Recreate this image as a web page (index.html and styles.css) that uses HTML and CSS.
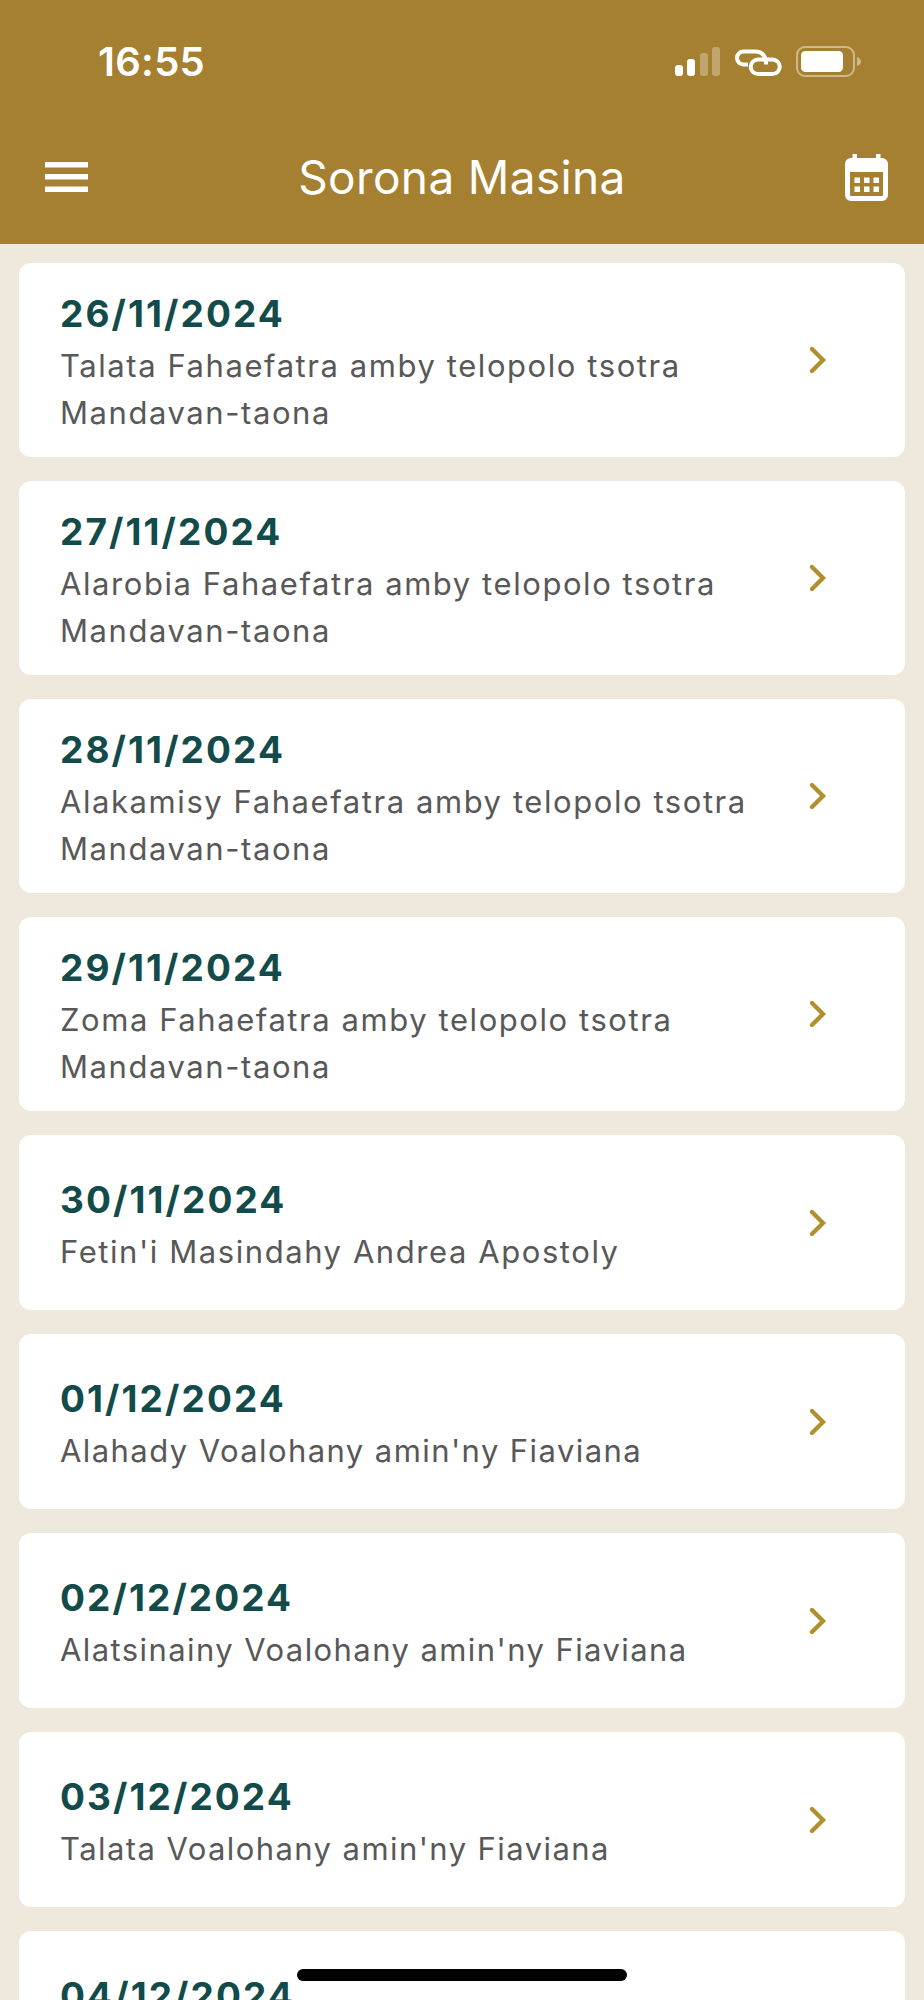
FILE: index.html
```html
<!DOCTYPE html>
<html lang="mg">
<head>
<meta charset="utf-8">
<title>Sorona Masina</title>
<link rel="stylesheet" href="styles.css">
</head>
<body>
<div class="screen">
  <header class="header">
    <div class="status">
      <span class="time">16:55</span>
      <div class="status-icons">
        <svg class="ic-signal" width="45" height="29" viewBox="0 0 45 29"><rect x="0" y="18" width="8" height="11" rx="3" fill="#fff"/><rect x="12" y="12" width="8" height="17" rx="3" fill="#fff"/><rect x="25" y="6" width="8" height="23" rx="3" fill="#fff" fill-opacity=".3"/><rect x="37" y="0" width="8" height="29" rx="3" fill="#fff" fill-opacity=".3"/></svg>
        <svg class="ic-link" width="47" height="28" viewBox="0 0 47 28" fill="none" stroke="#fff" stroke-width="4"><path d="M13 16.500H8.500a6.500 6.500 0 0 1 0-13H21c6 0 10.500 5 10 13"/><path d="M23 11.500H37.500a7.250 7.250 0 0 1 0 14.500H23a7.250 7.250 0 0 1 0-14.500z"/></svg>
        <svg class="ic-battery" width="65" height="31" viewBox="0 0 65 31" fill="none"><rect x="1" y="1" width="57" height="29" rx="8" stroke="#fff" stroke-opacity=".45" stroke-width="2"/><rect x="5" y="5" width="42" height="21" rx="4.500" fill="#fff"/><path d="M61 11c2.500 .6 4 2.300 4 4.500s-1.500 3.900-4 4.500z" fill="#fff" fill-opacity=".45"/></svg>
      </div>
    </div>
    <nav class="nav">
      <svg class="ic-menu" width="43" height="30" viewBox="0 0 43 30" fill="#fff"><rect y="0" width="43" height="5.500"/><rect y="12" width="43" height="5.500"/><rect y="24.500" width="43" height="5.500"/></svg>
      <h1 class="title">Sorona Masina</h1>
      <svg class="ic-cal" width="43" height="47" viewBox="0 0 43 47"><path fill="#fff" fill-rule="evenodd" d="M7.500 0h4.500v4h19V0h4.500v4H37a6 6 0 0 1 6 6v31a6 6 0 0 1-6 6H6a6 6 0 0 1-6-6V10a6 6 0 0 1 6-6h1.500zM5 18v23a1 1 0 0 0 1 1h31a1 1 0 0 0 1-1V18z"/><g fill="#fff"><rect x="9.500" y="23.500" width="5.500" height="5.500"/><rect x="19" y="23.500" width="5.500" height="5.500"/><rect x="28.500" y="23.500" width="5.500" height="5.500"/><rect x="9.500" y="32.500" width="5.500" height="5.500"/><rect x="19" y="32.500" width="5.500" height="5.500"/><rect x="28.500" y="32.500" width="5.500" height="5.500"/></g></svg>
    </nav>
  </header>
  <main class="list">
    <a class="card"><div class="card-text"><div class="date">26/11/2024</div><div class="desc">Talata Fahaefatra amby telopolo tsotra Mandavan-taona</div></div><svg class="chev" width="18" height="28" viewBox="0 0 18 28"><path d="M3 3l11 11L3 25" fill="none" stroke="#b08f2c" stroke-width="4.300" stroke-linecap="round"/></svg></a>
    <a class="card"><div class="card-text"><div class="date">27/11/2024</div><div class="desc">Alarobia Fahaefatra amby telopolo tsotra Mandavan-taona</div></div><svg class="chev" width="18" height="28" viewBox="0 0 18 28"><path d="M3 3l11 11L3 25" fill="none" stroke="#b08f2c" stroke-width="4.300" stroke-linecap="round"/></svg></a>
    <a class="card"><div class="card-text"><div class="date">28/11/2024</div><div class="desc">Alakamisy Fahaefatra amby telopolo tsotra Mandavan-taona</div></div><svg class="chev" width="18" height="28" viewBox="0 0 18 28"><path d="M3 3l11 11L3 25" fill="none" stroke="#b08f2c" stroke-width="4.300" stroke-linecap="round"/></svg></a>
    <a class="card"><div class="card-text"><div class="date">29/11/2024</div><div class="desc">Zoma Fahaefatra amby telopolo tsotra Mandavan-taona</div></div><svg class="chev" width="18" height="28" viewBox="0 0 18 28"><path d="M3 3l11 11L3 25" fill="none" stroke="#b08f2c" stroke-width="4.300" stroke-linecap="round"/></svg></a>
    <a class="card"><div class="card-text"><div class="date">30/11/2024</div><div class="desc">Fetin'i Masindahy Andrea Apostoly</div></div><svg class="chev" width="18" height="28" viewBox="0 0 18 28"><path d="M3 3l11 11L3 25" fill="none" stroke="#b08f2c" stroke-width="4.300" stroke-linecap="round"/></svg></a>
    <a class="card"><div class="card-text"><div class="date">01/12/2024</div><div class="desc desc-tight">Alahady Voalohany amin'ny Fiaviana</div></div><svg class="chev" width="18" height="28" viewBox="0 0 18 28"><path d="M3 3l11 11L3 25" fill="none" stroke="#b08f2c" stroke-width="4.300" stroke-linecap="round"/></svg></a>
    <a class="card"><div class="card-text"><div class="date">02/12/2024</div><div class="desc desc-tight">Alatsinainy Voalohany amin'ny Fiaviana</div></div><svg class="chev" width="18" height="28" viewBox="0 0 18 28"><path d="M3 3l11 11L3 25" fill="none" stroke="#b08f2c" stroke-width="4.300" stroke-linecap="round"/></svg></a>
    <a class="card"><div class="card-text"><div class="date">03/12/2024</div><div class="desc desc-tight">Talata Voalohany amin'ny Fiaviana</div></div><svg class="chev" width="18" height="28" viewBox="0 0 18 28"><path d="M3 3l11 11L3 25" fill="none" stroke="#b08f2c" stroke-width="4.300" stroke-linecap="round"/></svg></a>
    <a class="card card-cut"><div class="card-text"><div class="date">04/12/2024</div></div></a>
  </main>
  <div class="home-bar"></div>
</div>
</body>
</html>
```

FILE: styles.css
```css
* { box-sizing: border-box; }
html, body { margin: 0; padding: 0; }
body { font-family: Inter, "Liberation Sans", sans-serif; background: #efe8dc; }
.screen { position: relative; width: 924px; height: 2000px; overflow: hidden; background: #efe8dc; }
.header { height: 244px; background: #a58030; display: flex; flex-direction: column; color: #fff; }
.status { height: 124px; display: flex; justify-content: space-between; align-items: flex-start; padding: 39px 63px 0 98px; }
.time { font-size: 40px; line-height: 46px; font-weight: 600; letter-spacing: .3px; }
.status-icons { display: flex; align-items: center; gap: 14.500px; padding-top: 7px; }
.nav { flex: 1; display: grid; grid-template-columns: 1fr auto 1fr; align-items: center; padding: 0 36px; margin-top: -14px; }
.ic-menu { margin-left: 9px; }
.ic-cal { justify-self: end; }
.title { margin: 0; font-size: 46px; line-height: 56px; font-weight: 400; letter-spacing: .35px; }
.list { display: flex; flex-direction: column; gap: 24px; padding: 19px 19px 0; }
.card { flex: none; min-height: 175px; padding: 21px 78px 21px 41px; background: #fff; border-radius: 12px; display: flex; align-items: center; gap: 40px; }
.card-cut { align-items: flex-start; padding-top: 35px; }
.card-text { flex: 1; }
.date { padding-top: 2px; font-size: 37px; line-height: 56px; font-weight: 700; letter-spacing: 2.1px; color: #124b4a; }
.desc { font-size: 31px; line-height: 47px; font-weight: 400; letter-spacing: 1.570px; color: #585858; }
.desc-tight { letter-spacing: 1.420px; }
.chev { flex: none; }
.home-bar { position: absolute; left: 297px; top: 1969px; width: 330px; height: 12px; border-radius: 6px; background: #000; }
```
